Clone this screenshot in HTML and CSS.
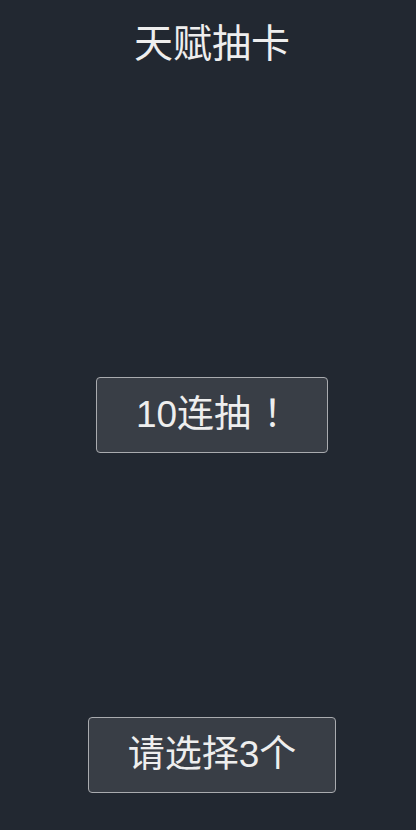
FILE: index.html
```html
<!DOCTYPE html>
<html lang="zh">
<head>
<meta charset="utf-8">
<title>天赋抽卡</title>
<link rel="stylesheet" href="styles.css">
</head>
<body>
<div class="app">
  <header class="top">
    <h1 class="title">天赋抽卡</h1>
  </header>
  <main class="middle">
    <button class="btn">10连抽<span class="punct">！</span></button>
  </main>
  <footer class="bottom">
    <button class="btn">请选择3个</button>
  </footer>
</div>
</body>
</html>
```

FILE: styles.css
```css
html, body {
  margin: 0;
  padding: 0;
  background: #222831;
}
.app {
  height: 830px;
  display: flex;
  flex-direction: column;
  padding-left: 8px;
  font-family: "Liberation Sans", "Noto Sans CJK SC", sans-serif;
  color: #eeeeee;
}
.top {
  height: 120px;
  display: flex;
  justify-content: center;
  align-items: flex-start;
}
.title {
  margin: 0;
  padding-top: 16px;
  font-size: 39px;
  font-weight: normal;
  line-height: 56px;
}
.middle {
  flex: 1;
  display: flex;
  justify-content: center;
  align-items: center;
}
.bottom {
  height: 120px;
  display: flex;
  justify-content: center;
  align-items: flex-end;
  padding-bottom: 37px;
  box-sizing: border-box;
}
.btn {
  font-family: "Liberation Sans", "Noto Sans CJK SC", sans-serif;
  font-size: 37px;
  line-height: 52px;
  color: #eeeeee;
  background: #393e46;
  border: 1px solid #a9abaf;
  border-radius: 4px;
  padding: 11px 39px;
  margin: 0;
}
.punct {
  display: inline-block;
  margin-left: 0.33em;
  margin-right: -0.33em;
}
```
